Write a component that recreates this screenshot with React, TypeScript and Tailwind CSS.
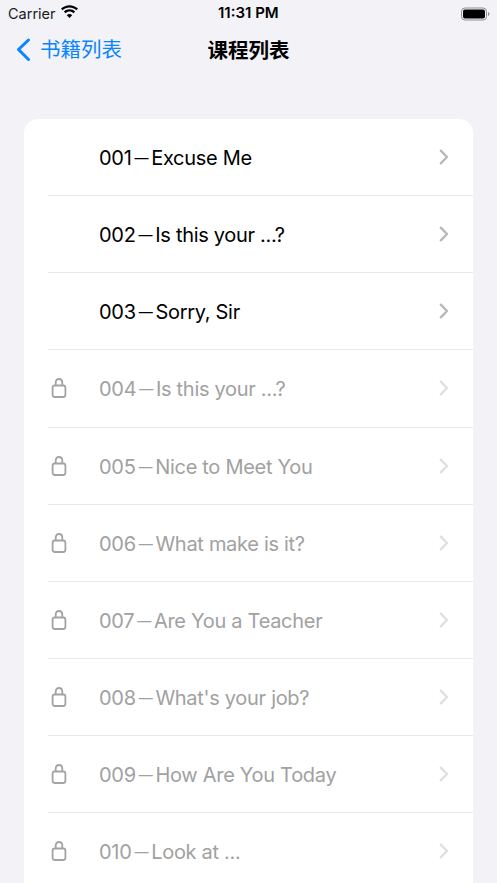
const lessons = [
  { no: "001", title: "Excuse Me", locked: false },
  { no: "002", title: "Is this your ...?", locked: false },
  { no: "003", title: "Sorry, Sir", locked: false },
  { no: "004", title: "Is this your ...?", locked: true },
  { no: "005", title: "Nice to Meet You", locked: true },
  { no: "006", title: "What make is it?", locked: true },
  { no: "007", title: "Are You a Teacher", locked: true },
  { no: "008", title: "What's your job?", locked: true },
  { no: "009", title: "How Are You Today", locked: true },
  { no: "010", title: "Look at ...", locked: true },
]

function WifiIcon() {
  return (
    <svg width="19" height="14" viewBox="0 0 19 14" className="mt-[-3px]">
      <path d="M9.5 2.6c2.6 0 5 1 6.9 2.7l1.6-1.7C15.700 1.500 12.700.2 9.500.2S3.300 1.500 1 3.600l1.600 1.700C4.500 3.600 6.900 2.600 9.500 2.600z" fill="#000" />
      <path d="M9.500 6.600c1.500 0 2.900.6 4 1.600l1.600-1.700c-1.500-1.400-3.500-2.200-5.600-2.200S5.400 5.100 3.900 6.500l1.600 1.700c1.100-1 2.500-1.600 4-1.600z" fill="#000" />
      <path d="M9.500 9.100c-1.100 0-2 .4-2.700 1.100l2.700 2.900 2.700-2.900c-.7-.7-1.600-1.100-2.700-1.100z" fill="#000" />
    </svg>
  )
}

function BatteryIcon() {
  return (
    <svg width="29" height="14" viewBox="0 0 29 14">
      <rect x="0.5" y="1" width="25" height="12" rx="3.500" fill="none" stroke="#8e8e93" />
      <rect x="2" y="2.500" width="22" height="9" rx="2" fill="#000" />
      <path d="M27 5v4c.8-.3 1.400-1.100 1.400-2S27.800 5.300 27 5z" fill="#8e8e93" />
    </svg>
  )
}

function LockIcon() {
  return (
    <svg width="16" height="20" viewBox="0 0 16 20" fill="none" stroke="#a3a3a3" strokeWidth="1.800">
      <rect x="1.600" y="7.500" width="12.800" height="11.500" rx="2.200" />
      <path d="M4.700 7.500V4.600C4.700 2.400 6 1 8 1s3.300 1.400 3.300 3.600v2.900" />
    </svg>
  )
}

function Chevron({ locked }: { locked: boolean }) {
  return (
    <svg width="10" height="16" viewBox="0 0 10 16" fill="none" stroke={locked ? "#e0e0e0" : "#b8b8bb"} strokeWidth="2.400" strokeLinecap="round" strokeLinejoin="round">
      <path d="M1.800 1.700 8 8l-6.200 6.300" />
    </svg>
  )
}

export default function App() {
  return (
    <div className="h-[883px] w-[497px] overflow-hidden bg-[#f2f2f7] font-['Inter','Noto_Sans_CJK_SC',sans-serif] text-black">
      <div className="flex h-[27px] items-center pl-[8px] pr-[7px] text-[14.5px]">
        <span className="w-[52px] text-[#1c1c1e]">Carrier</span>
        <WifiIcon />
        <span className="ml-[139px] text-[15px] font-semibold">11:31 PM</span>
        <div className="ml-auto">
          <BatteryIcon />
        </div>
      </div>

      <div className="relative flex h-[46px] items-center justify-center">
        <div className="absolute left-[16px] top-[11px] flex items-center text-[#0a84ff]">
          <svg width="15" height="23" viewBox="0 0 15 23" fill="none" stroke="#0a84ff" strokeWidth="3" strokeLinecap="round" strokeLinejoin="round">
            <path d="M12.500 2 2.500 11.500l10 10" />
          </svg>
          <span className="ml-[9px] text-[20.500px] leading-[22px]">书籍列表</span>
        </div>
        <span className="mt-[2px] text-[20.500px] font-semibold">课程列表</span>
      </div>

      <div className="mx-[24px] mt-[46px] rounded-t-[14px] bg-white pl-[24px]">
        {lessons.map((l) => (
          <div key={l.no} className="flex h-[77.140px] items-center border-b border-[#e9e9ec] pr-[24px]">
            <div className="flex w-[51px] items-center pl-[3px]">{l.locked && <LockIcon />}</div>
            <span className={`mt-[2px] flex-1 text-[20px] tracking-[-0.3px] ${l.locked ? "text-[#a1a1a1]" : "text-black"}`}>
              {l.no}
              <span className="mx-[3px] align-[2px] text-[14px]">—</span>
              {l.title}
            </span>
            <Chevron locked={l.locked} />
          </div>
        ))}
      </div>
    </div>
  )
}
